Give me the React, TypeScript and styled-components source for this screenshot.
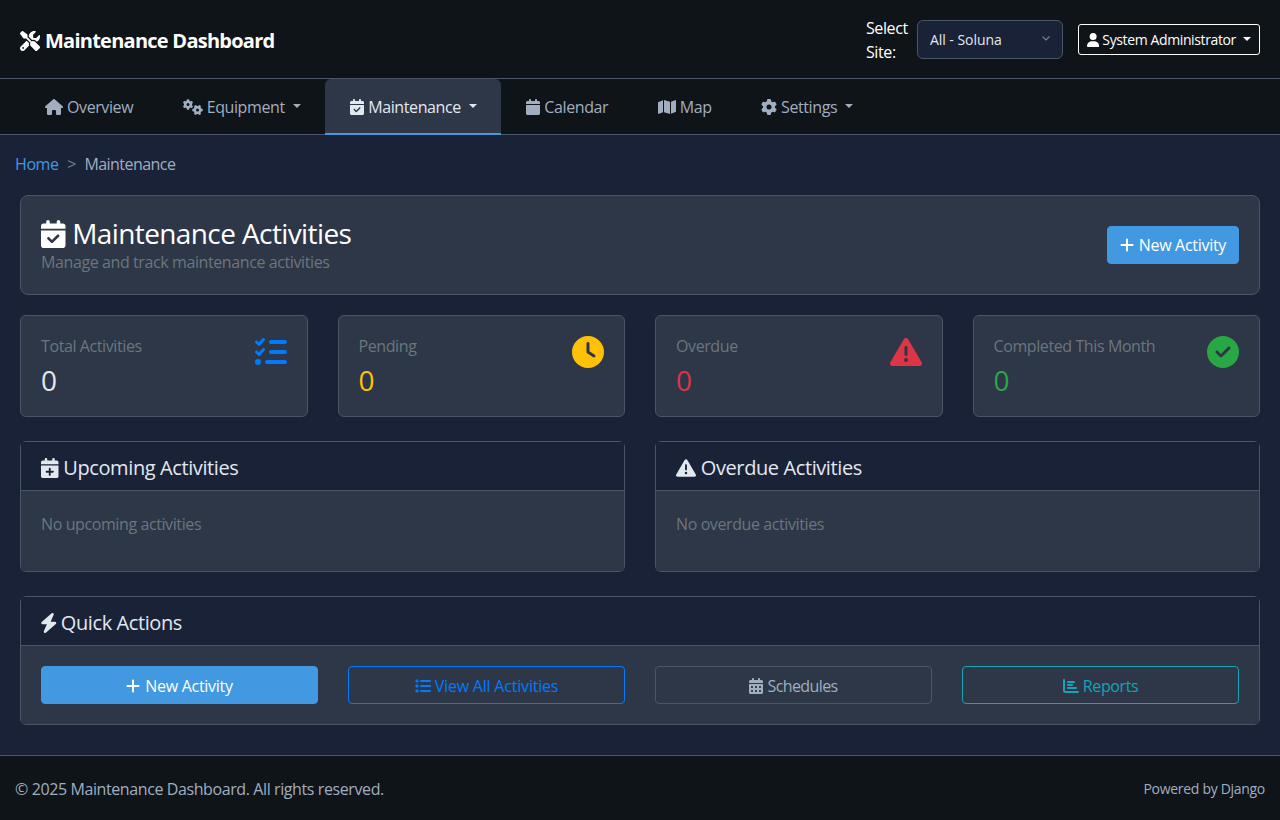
import React from "react";
import styled, { createGlobalStyle } from "styled-components";
import {
  FaScrewdriverWrench,
  FaHouse,
  FaGears,
  FaCalendarCheck,
  FaCalendar,
  FaMap,
  FaGear,
  FaUser,
  FaPlus,
  FaListCheck,
  FaClock,
  FaTriangleExclamation,
  FaCircleCheck,
  FaCalendarPlus,
  FaBolt,
  FaList,
  FaCalendarDays,
  FaChartBar,
} from "react-icons/fa6";

const GlobalStyle = createGlobalStyle`
  * { box-sizing: border-box; }
  html, body { margin: 0; padding: 0; }
  body {
    background: #1a2238;
    color: #e2e8f0;
    font-family: "Open Sans", "Liberation Sans", sans-serif;
    font-size: 16px;
    line-height: 24px;
    letter-spacing: -0.4px;
  }
  svg {
    display: inline-block;
    vertical-align: -0.125em;
    flex: none;
  }
`;

// react-icons draws every glyph in a 1em square, these get the real glyph width back
const HouseIcon = styled(FaHouse)`width: 1.125em;`;
const GearsIcon = styled(FaGears)`width: 1.25em;`;
const CalendarCheckIcon = styled(FaCalendarCheck)`width: 0.875em;`;
const CalendarIcon = styled(FaCalendar)`width: 0.875em;`;
const MapIcon = styled(FaMap)`width: 1.125em;`;
const UserIcon = styled(FaUser)`width: 0.875em;`;
const PlusIcon = styled(FaPlus)`width: 0.875em;`;
const CalendarPlusIcon = styled(FaCalendarPlus)`width: 0.875em;`;
const CalendarDaysIcon = styled(FaCalendarDays)`width: 0.875em;`;
const BoltIcon = styled(FaBolt)`
  width: 0.875em;
  margin: 0 -1.25px;
`;

const Page = styled.div`
  min-height: 820px;
  display: flex;
  flex-direction: column;
`;

const Header = styled.header`
  height: 79px;
  background: #0f1419;
  border-bottom: 1px solid #4a5568;
  display: flex;
  align-items: center;
  justify-content: space-between;
  padding: 0 20px;
`;

const Brand = styled.div`
  color: #fff;
  font-size: 20px;
  font-weight: 700;
  letter-spacing: -0.75px;
  display: flex;
  align-items: center;
  gap: 5px;
  padding-top: 4px;
`;

const HeaderRight = styled.div`
  display: flex;
  align-items: center;
`;

const SiteLabel = styled.label`
  width: 51px;
  color: #fff;
  padding-top: 2px;
`;

const SiteSelect = styled.div`
  width: 146px;
  height: 39px;
  background: #1a2238;
  border: 1px solid #4a5568;
  border-radius: 6px;
  color: #e2e8f0;
  font-size: 14px;
  letter-spacing: -0.05px;
  padding: 2px 12px 0;
  display: flex;
  align-items: center;
  justify-content: space-between;
  margin-right: 15px;
`;

const SelectChevron = styled.svg`
  width: 8px;
  height: 5px;
  margin-top: -4px;
  fill: none;
  stroke: #718096;
  stroke-width: 1.2;
`;

const UserButton = styled.button`
  width: 182px;
  height: 31px;
  background: transparent;
  border: 1px solid #fff;
  border-radius: 3px;
  color: #fff;
  font: inherit;
  font-size: 14px;
  letter-spacing: -0.38px;
  display: flex;
  align-items: center;
  justify-content: center;
  gap: 3px;
  padding: 2px 0 0;
`;

const Caret = styled.span`
  display: inline-block;
  width: 0;
  height: 0;
  margin-left: 4px;
  margin-top: -2px;
  border-top: 4.8px solid currentColor;
  border-left: 4.8px solid transparent;
  border-right: 4.8px solid transparent;
`;

const Nav = styled.nav`
  height: 56px;
  background: #0f1419;
  border-bottom: 1px solid #4a5568;
  display: flex;
  padding: 0 20px;
`;

const NavItem = styled.a<{ $active?: boolean }>`
  height: 56px;
  padding: 2px 24.5px 0 25px;
  display: flex;
  align-items: center;
  gap: 4px;
  color: ${(p) => (p.$active ? "#e2e8f0" : "#a0aec0")};
  background: ${(p) => (p.$active ? "#2d3748" : "transparent")};
  border-bottom: 2px solid ${(p) => (p.$active ? "#4299e1" : "transparent")};
  border-radius: ${(p) => (p.$active ? "6px 6px 0 0" : "0")};
`;

const Crumbs = styled.div`
  height: 60px;
  padding: 17px 15px 0;
  display: flex;
  color: #a0aec0;
`;

const CrumbLink = styled.a`
  color: #4299e1;
`;

const CrumbSep = styled.span`
  color: #718096;
  padding: 0 8.5px;
`;

const CrumbCurrent = styled.span`
  letter-spacing: -0.55px;
`;

const Main = styled.main`
  flex: 1;
  padding: 0 20px;
  display: flex;
  flex-direction: column;
`;

const TitleCard = styled.section`
  height: 100px;
  background: #2d3748;
  border: 1px solid #4a5568;
  border-radius: 8px;
  padding: 0 20px;
  display: flex;
  align-items: center;
  justify-content: space-between;
  margin-bottom: 20px;
`;

const PageTitle = styled.h1`
  margin: 0 0 2px;
  font-size: 28px;
  line-height: 32px;
  font-weight: 400;
  letter-spacing: -0.6px;
  color: #fff;
`;

const Subtitle = styled.p`
  margin: 0;
  color: #6c757d;
  line-height: 22px;
`;

const PrimaryButton = styled.button`
  height: 38px;
  padding: 1px 12px 0;
  background: #4299e1;
  border: 1px solid #4299e1;
  border-radius: 4px;
  color: #fff;
  font: inherit;
  letter-spacing: -0.3px;
  display: flex;
  align-items: center;
  justify-content: center;
  gap: 5px;
`;

const TitleButton = styled(PrimaryButton)`
  padding-top: 0;
  padding-bottom: 1px;
`;

const StatGrid = styled.div`
  display: grid;
  grid-template-columns: repeat(4, 1fr);
  gap: 30px;
  margin-bottom: 24px;
`;

const StatCard = styled.div`
  height: 102px;
  background: #2d3748;
  border: 1px solid #4a5568;
  border-radius: 6px;
  padding: 18px 20px 0;
  display: flex;
  justify-content: space-between;
`;

const StatLabel = styled.div`
  color: #6c757d;
  margin-bottom: 5px;
`;

const StatValue = styled.div<{ $color: string }>`
  color: ${(p) => p.$color};
  font-size: 28px;
  line-height: 34px;
`;

const StatIcon = styled.div<{ $color: string }>`
  color: ${(p) => p.$color};
  font-size: 32px;
  line-height: 32px;
  height: 32px;
  margin-top: 2px;
  svg { display: block; }
`;

const PanelGrid = styled.div`
  display: grid;
  grid-template-columns: repeat(2, 1fr);
  gap: 30px;
  margin-bottom: 24px;
`;

const Panel = styled.section`
  background: #2d3748;
  border: 1px solid #4a5568;
  border-radius: 6px;
`;

const PanelHeader = styled.div`
  height: 49px;
  background: #1a2238;
  border-bottom: 1px solid #4a5568;
  padding: 4px 20px 0;
  display: flex;
  align-items: center;
`;

const PanelTitle = styled.h5`
  margin: 0;
  font-size: 20px;
  font-weight: 400;
  color: #e2e8f0;
`;

const EmptyBody = styled.div`
  height: 80px;
  padding: 21px 20px;
  background: #2d3748;
  color: #6c757d;
`;

const ActionBody = styled.div`
  padding: 20px;
  background: #2d3748;
  display: grid;
  grid-template-columns: repeat(4, 1fr);
  gap: 30px;
`;

const OutlineButton = styled.button<{ $color: string; $border: string; $tracking: number }>`
  height: 38px;
  padding: 1px 0 0;
  background: transparent;
  border: 1px solid ${(p) => p.$border};
  border-radius: 4px;
  color: ${(p) => p.$color};
  font: inherit;
  letter-spacing: ${(p) => p.$tracking}px;
  display: flex;
  align-items: center;
  justify-content: center;
  gap: 4px;
`;

const Footer = styled.footer`
  height: 65px;
  background: #0f1419;
  border-top: 1px solid #4a5568;
  padding: 2px 15px 0;
  display: flex;
  align-items: center;
  justify-content: space-between;
  color: #a0aec0;
`;

const FooterNote = styled.small`
  font-size: 14px;
  letter-spacing: -0.3px;
`;

const navItems = [
  { label: "Overview", icon: <HouseIcon /> },
  { label: "Equipment", icon: <GearsIcon />, menu: true },
  { label: "Maintenance", icon: <CalendarCheckIcon />, menu: true, active: true },
  { label: "Calendar", icon: <CalendarIcon /> },
  { label: "Map", icon: <MapIcon /> },
  { label: "Settings", icon: <FaGear />, menu: true },
];

const stats = [
  { label: "Total Activities", color: "#e2e8f0", iconColor: "#007bff", icon: <FaListCheck /> },
  { label: "Pending", color: "#ffc107", iconColor: "#ffc107", icon: <FaClock /> },
  { label: "Overdue", color: "#dc3545", iconColor: "#dc3545", icon: <FaTriangleExclamation /> },
  { label: "Completed This Month", color: "#28a745", iconColor: "#28a745", icon: <FaCircleCheck /> },
];

export default function App() {
  return (
    <Page>
      <GlobalStyle />
      <Header>
        <Brand>
          <FaScrewdriverWrench />
          Maintenance Dashboard
        </Brand>
        <HeaderRight>
          <SiteLabel>Select Site:</SiteLabel>
          <SiteSelect>
            All - Soluna
            <SelectChevron viewBox="0 0 8 5">
              <path d="M0.5 0.5L4 4L7.5 0.5" />
            </SelectChevron>
          </SiteSelect>
          <UserButton>
            <UserIcon />
            System Administrator
            <Caret />
          </UserButton>
        </HeaderRight>
      </Header>

      <Nav>
        {navItems.map((item) => (
          <NavItem key={item.label} $active={item.active}>
            {item.icon}
            {item.label}
            {item.menu && <Caret />}
          </NavItem>
        ))}
      </Nav>

      <Crumbs>
        <CrumbLink>Home</CrumbLink>
        <CrumbSep>&gt;</CrumbSep>
        <CrumbCurrent>Maintenance</CrumbCurrent>
      </Crumbs>

      <Main>
        <TitleCard>
          <div>
            <PageTitle>
              <CalendarCheckIcon /> Maintenance Activities
            </PageTitle>
            <Subtitle>Manage and track maintenance activities</Subtitle>
          </div>
          <TitleButton>
            <PlusIcon />
            New Activity
          </TitleButton>
        </TitleCard>

        <StatGrid>
          {stats.map((s) => (
            <StatCard key={s.label}>
              <div>
                <StatLabel>{s.label}</StatLabel>
                <StatValue $color={s.color}>0</StatValue>
              </div>
              <StatIcon $color={s.iconColor}>{s.icon}</StatIcon>
            </StatCard>
          ))}
        </StatGrid>

        <PanelGrid>
          <Panel>
            <PanelHeader>
              <PanelTitle>
                <CalendarPlusIcon /> Upcoming Activities
              </PanelTitle>
            </PanelHeader>
            <EmptyBody>No upcoming activities</EmptyBody>
          </Panel>
          <Panel>
            <PanelHeader>
              <PanelTitle>
                <FaTriangleExclamation /> Overdue Activities
              </PanelTitle>
            </PanelHeader>
            <EmptyBody>No overdue activities</EmptyBody>
          </Panel>
        </PanelGrid>

        <Panel>
          <PanelHeader>
            <PanelTitle>
              <BoltIcon /> Quick Actions
            </PanelTitle>
          </PanelHeader>
          <ActionBody>
            <PrimaryButton>
              <PlusIcon />
              New Activity
            </PrimaryButton>
            <OutlineButton $color="#007bff" $border="#007bff" $tracking={-0.2}>
              <FaList />
              View All Activities
            </OutlineButton>
            <OutlineButton $color="#a0aec0" $border="#4a5568" $tracking={-0.6}>
              <CalendarDaysIcon />
              Schedules
            </OutlineButton>
            <OutlineButton $color="#17a2b8" $border="#17a2b8" $tracking={-0.4}>
              <FaChartBar />
              Reports
            </OutlineButton>
          </ActionBody>
        </Panel>
      </Main>

      <Footer>
        <span>© 2025 Maintenance Dashboard. All rights reserved.</span>
        <FooterNote>Powered by Django</FooterNote>
      </Footer>
    </Page>
  );
}
